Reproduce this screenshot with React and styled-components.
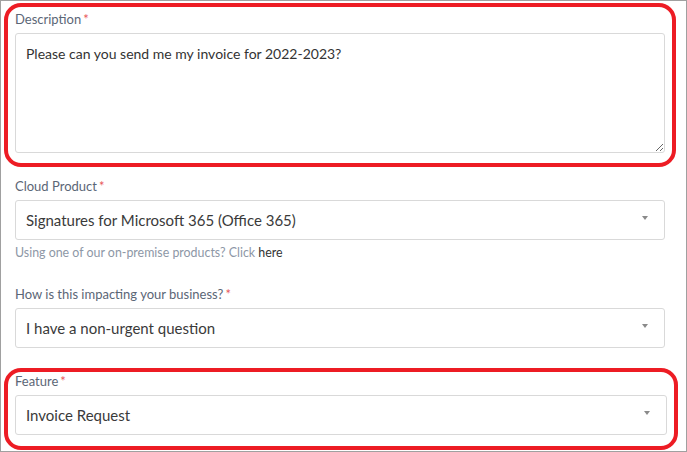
import React from 'react';
import styled, { createGlobalStyle } from 'styled-components';

const GlobalStyle = createGlobalStyle`
  html, body {
    margin: 0;
    padding: 0;
    background: #ffffff;
  }
  body {
    font-family: Lato, "Open Sans", sans-serif;
  }
`;

const Frame = styled.div`
  box-sizing: border-box;
  width: 687px;
  height: 452px;
  border: 1px solid #a0a0a0;
  background: #fff;
  overflow: hidden;
`;

const Form = styled.div`
  display: flex;
  flex-direction: column;
  gap: 25px;
  padding: 10px 21px 0 14px;
`;

// red annotation drawn around a field
const Highlight = styled.div`
  border: 4px solid #ed1c24;
  border-radius: 17px;
  padding: ${p => p.$pt}px 7px ${p => p.$pb}px 7px;
  margin: -${p => p.$pt + 4}px -${p => p.$pr}px -${p => p.$pb + 4}px -11px;
`;

const Field = styled.div`
  display: flex;
  flex-direction: column;
`;

const Label = styled.label`
  font-size: 13px;
  line-height: 17px;
  color: #5b6676;
  margin-bottom: 5px;
`;

const Required = styled.span`
  color: #e8585a;
  margin-left: 2px;
`;

const TextArea = styled.textarea`
  box-sizing: border-box;
  width: 100%;
  height: 120px;
  border: 1px solid #d9d9d9;
  border-radius: 3px;
  padding: 10px 10px;
  font-family: inherit;
  font-size: 14px;
  line-height: 20px;
  color: #333;
  outline: none;
  resize: both;
  display: block;
`;

const SelectBox = styled.div`
  box-sizing: border-box;
  height: 40px;
  border: 1px solid #d9d9d9;
  border-radius: 3px;
  padding: 0 16px 0 10px;
  display: flex;
  align-items: center;
  justify-content: space-between;
  font-size: 15px;
  color: #3a3a3a;
`;

const Caret = styled.span`
  width: 0;
  height: 0;
  border-left: 3px solid transparent;
  border-right: 3px solid transparent;
  border-top: 4px solid #8a8a8a;
  margin-top: -4px;
`;

const Help = styled.div`
  margin-top: 5px;
  font-size: 12.4px;
  line-height: 16px;
  color: #8d97a6;

  a {
    color: #333;
    text-decoration: none;
  }
`;

const Select = ({ value }) => (
  <SelectBox>
    <span>{value}</span>
    <Caret />
  </SelectBox>
);

const FieldLabel = ({ children }) => (
  <Label>
    {children}
    <Required>*</Required>
  </Label>
);

export default function App() {
  return (
    <Frame>
      <GlobalStyle />
      <Form>
        <Highlight $pt={4} $pb={10} $pr={11}>
          <Field>
            <FieldLabel>Description</FieldLabel>
            <TextArea readOnly defaultValue="Please can you send me my invoice for 2022-2023?" />
          </Field>
        </Highlight>

        <Field>
          <FieldLabel>Cloud Product</FieldLabel>
          <Select value="Signatures for Microsoft 365 (Office 365)" />
          <Help>
            Using one of our on-premise products? Click <a href="#here">here</a>
          </Help>
        </Field>

        <Field>
          <FieldLabel>How is this impacting your business?</FieldLabel>
          <Select value="I have a non-urgent question" />
        </Field>

        <Highlight $pt={1} $pb={11} $pr={13}>
          <Field>
            <FieldLabel>Feature</FieldLabel>
            <Select value="Invoice Request" />
          </Field>
        </Highlight>
      </Form>
    </Frame>
  );
}
